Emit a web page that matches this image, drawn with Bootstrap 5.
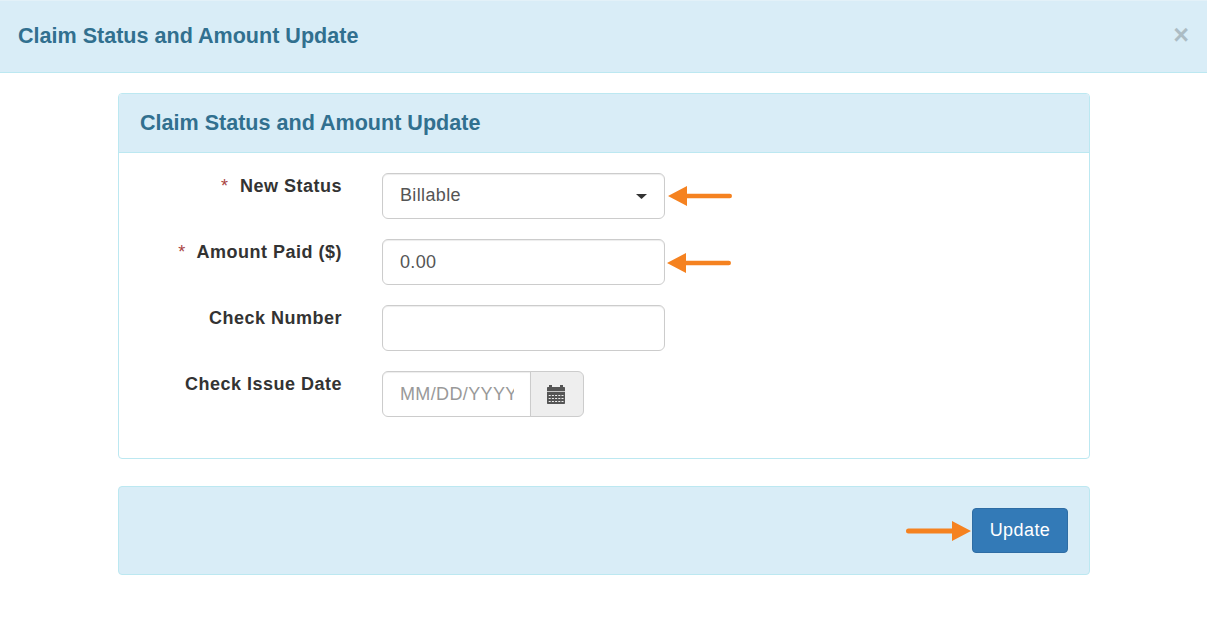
<!DOCTYPE html>
<html lang="en">
<head>
<meta charset="utf-8">
<title>Claim Status and Amount Update</title>
<link href="https://cdn.jsdelivr.net/npm/bootstrap@5.3.0/dist/css/bootstrap.min.css" rel="stylesheet">
<style>
html,body{height:100%;}
body{font-family:"Liberation Sans",Arial,sans-serif;color:#333;background:#fff;font-size:18px;overflow:hidden;}
.dlg-head{background:#d9edf7;border-top:1px solid #e3f1f8;border-bottom:1px solid #bce8f1;height:73px;padding:0 18px 2px;}
.dlg-title{color:#31708f;font-size:21.55px;font-weight:700;margin:0;line-height:1;}
.dlg-close{background:none;border:0;padding:0;color:#000;opacity:.2;font-size:27px;font-weight:700;line-height:1;}
.dlg-body{padding:20px 117px 0 118px;}
.pane{border:1px solid #bce8f1;border-radius:4px;background:#fff;}
.pane-head{background:#d9edf7;border-bottom:1px solid #bce8f1;height:59px;padding:0 21px;border-radius:3px 3px 0 0;}
.pane-main{padding:20px 0 0;height:305px;}
.frow{height:46px;margin-bottom:20px;}
.flabel{width:223px;margin-right:40px;text-align:right;font-weight:700;line-height:26px;letter-spacing:.5px;margin-bottom:0;}
.req{color:#a94442;font-weight:400;margin-right:6px;}
.fctl{width:283px;height:46px;font-size:18px;font-family:inherit;color:#555;border:1px solid #ccc;border-radius:6px;padding:8px 17px 10px;letter-spacing:.36px;box-shadow:inset 0 1px 1px rgba(0,0,0,.075);}
input.fctl{padding:10px 17px;}
select.fctl{background-size:11px 5px;background-position:right 17px center;background-image:url("data:image/svg+xml,%3Csvg xmlns='http://www.w3.org/2000/svg' viewBox='0 0 11 5'%3E%3Cpath fill='%23333' d='M0 0h11L5.500 5z'/%3E%3C/svg%3E");}
.dategrp{width:202px;}
.dategrp .form-control{height:46px;font-size:18px;font-family:inherit;color:#555;letter-spacing:.36px;border-color:#ccc;border-radius:6px 0 0 6px;padding:10px 16px 10px 17px;box-shadow:inset 0 1px 1px rgba(0,0,0,.075);min-width:0;}
.dategrp .form-control::placeholder{color:#999;opacity:1;}
.dategrp .input-group-text{background:#eee;border-color:#ccc;border-radius:0 6px 6px 0;width:54px;justify-content:center;padding:0 2px 0 0;margin-left:-1px;}
.arrow{display:block;flex:none;}
.arrow1{margin-left:3px;margin-top:-1px;}
.arrow2{margin-left:2px;margin-top:2px;}
.pane-foot{margin-top:27px;background:#d9edf7;border:1px solid #bce8f1;border-radius:4px;height:89px;padding:0 21px 0 0;}
.btn-upd{--bs-btn-bg:#337ab7;--bs-btn-border-color:#2e6da4;--bs-btn-hover-bg:#286090;--bs-btn-hover-border-color:#204d74;--bs-btn-color:#fff;--bs-btn-hover-color:#fff;font-size:18px;letter-spacing:.42px;width:96px;height:45px;padding:0;border-radius:4px;margin-left:1px;}
</style>
</head>
<body>
<header class="dlg-head d-flex align-items-center justify-content-between">
  <h4 class="dlg-title">Claim Status and Amount Update</h4>
  <button type="button" class="dlg-close" aria-label="Close">×</button>
</header>
<main class="dlg-body">
  <section class="pane">
    <div class="pane-head d-flex align-items-center">
      <h4 class="dlg-title">Claim Status and Amount Update</h4>
    </div>
    <form class="pane-main">
      <div class="frow d-flex">
        <label class="flabel" for="st"><span class="req">*</span> New Status</label>
        <select id="st" class="form-select fctl"><option>Billable</option></select>
        <svg class="arrow arrow1 align-self-center" width="64" height="20" viewBox="0 0 64 20"><path fill="#f58220" d="M0 10 19 0v7.700h42.700a2.300 2.300 0 0 1 0 4.600H19V20z"/></svg>
      </div>
      <div class="frow d-flex">
        <label class="flabel" for="am"><span class="req">*</span> Amount Paid ($)</label>
        <input id="am" class="form-control fctl" value="0.00">
        <svg class="arrow arrow2 align-self-center" width="64" height="20" viewBox="0 0 64 20"><path fill="#f58220" d="M0 10 19 0v7.700h42.700a2.300 2.300 0 0 1 0 4.600H19V20z"/></svg>
      </div>
      <div class="frow d-flex">
        <label class="flabel" for="cn">Check Number</label>
        <input id="cn" class="form-control fctl">
      </div>
      <div class="frow d-flex">
        <label class="flabel" for="cd">Check Issue Date</label>
        <div class="input-group dategrp flex-nowrap">
          <input id="cd" class="form-control" placeholder="MM/DD/YYYY">
          <span class="input-group-text">
            <svg width="18" height="19" viewBox="0 0 18 19"><path fill="#555" fill-rule="evenodd" d="M2 0h3v2h8V0h3v2h1c.6 0 1 .4 1 1v3.300H0V3c0-.6.4-1 1-1h1zM0 7h18v11c0 .6-.4 1-1 1H1c-.6 0-1-.4-1-1zM1.700 10v1h2v-1zm3.200 0v1h2v-1zm3.200 0v1h2v-1zm3.200 0v1h2v-1zm3.200 0v1h2v-1zM1.700 13v1h2v-1zm3.200 0v1h2v-1zm3.200 0v1h2v-1zm3.200 0v1h2v-1zm3.200 0v1h2v-1zM1.700 16v1h2v-1zm3.200 0v1h2v-1zm3.200 0v1h2v-1zm3.200 0v1h2v-1zm3.200 0v1h2v-1z"/></svg>
          </span>
        </div>
      </div>
    </form>
  </section>
  <section class="pane-foot d-flex align-items-center justify-content-end">
    <svg class="arrow" width="65" height="20" viewBox="0 0 65 20"><path fill="#f58220" d="M65 10 46 0v7.500H2.500a2.500 2.500 0 0 0 0 5H46V20z"/></svg>
    <button type="button" class="btn btn-upd">Update</button>
  </section>
</main>
<script src="https://cdn.jsdelivr.net/npm/bootstrap@5.3.0/dist/js/bootstrap.bundle.min.js"></script>
</body>
</html>
